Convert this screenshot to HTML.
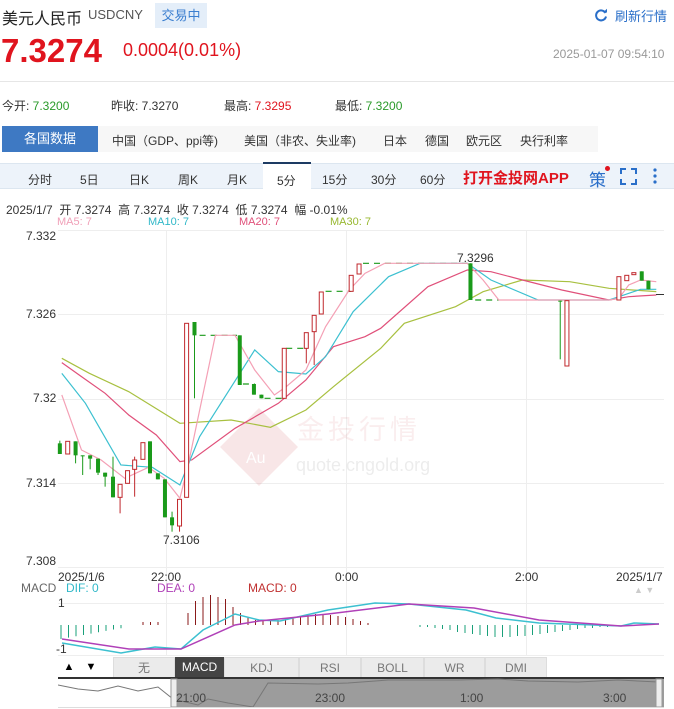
<!DOCTYPE html><html><head><meta charset="utf-8"><style>
*{margin:0;padding:0;box-sizing:border-box}
body{width:674px;height:709px;overflow:hidden;background:#fff;font-family:"Liberation Sans","Noto Sans CJK SC",sans-serif;color:#333;position:relative}
.a{position:absolute;white-space:nowrap}
</style></head><body>
<div class="a" style="left:2px;top:5px;font-size:16px;color:#222">美元人民币</div>
<div class="a" style="left:88px;top:7px;font-size:13px;color:#555">USDCNY</div>
<div class="a" style="left:155px;top:3px;width:52px;height:25px;background:#e4eef9;color:#3b7fd0;font-size:13px;line-height:25px;text-align:center">交易中</div>
<svg class="a" style="left:594px;top:8px" width="14" height="14" viewBox="0 0 14 14"><path d="M11.5 5A5 5 0 1 0 12 8.5" fill="none" stroke="#2a6fc9" stroke-width="2"/><path d="M9 4.5h4V0.8z" fill="#2a6fc9"/></svg>
<div class="a" style="left:615px;top:6px;font-size:13px;color:#2a6fc9">刷新行情</div>
<div class="a" style="left:1px;top:32px;font-size:33px;font-weight:bold;color:#e0141e">7.3274</div>
<div class="a" style="left:123px;top:40px;font-size:18px;color:#e0141e">0.0004(0.01%)</div>
<div class="a" style="left:553px;top:47px;font-size:12px;color:#999">2025-01-07 09:54:10</div>
<div class="a" style="left:0;top:81px;width:674px;height:1px;background:#e6e6e6"></div>
<div class="a" style="left:2px;top:97px;font-size:12px">今开: <span style="color:#2a9a2a">7.3200</span></div>
<div class="a" style="left:111px;top:97px;font-size:12px">昨收: 7.3270</div>
<div class="a" style="left:224px;top:97px;font-size:12px">最高: <span style="color:#e0141e">7.3295</span></div>
<div class="a" style="left:335px;top:97px;font-size:12px">最低: <span style="color:#2a9a2a">7.3200</span></div>
<div class="a" style="left:2px;top:126px;width:96px;height:26px;background:#3e79c3;color:#fff;font-size:13px;line-height:26px;text-align:center">各国数据</div>
<div class="a" style="left:98px;top:126px;width:500px;height:26px;background:#f7f7f7"></div>
<div class="a" style="left:112px;top:132px;font-size:12px">中国（GDP、ppi等)</div>
<div class="a" style="left:244px;top:132px;font-size:12px">美国（非农、失业率)</div>
<div class="a" style="left:383px;top:132px;font-size:12px">日本</div>
<div class="a" style="left:425px;top:132px;font-size:12px">德国</div>
<div class="a" style="left:466px;top:132px;font-size:12px">欧元区</div>
<div class="a" style="left:520px;top:132px;font-size:12px">央行利率</div>
<div class="a" style="left:0;top:163px;width:674px;height:26px;background:#edf3fa;border-top:1px solid #dce6f0;border-bottom:1px solid #dce6f0"></div>
<div class="a" style="left:263px;top:162px;width:48px;height:28px;background:#fff;border-top:2px solid #1d3b63"></div>
<div class="a" style="top:171px;left:28px;font-size:12px">分时</div>
<div class="a" style="top:171px;left:80px;font-size:12px">5日</div>
<div class="a" style="top:171px;left:129px;font-size:12px">日K</div>
<div class="a" style="top:171px;left:178px;font-size:12px">周K</div>
<div class="a" style="top:171px;left:227px;font-size:12px">月K</div>
<div class="a" style="top:172px;left:277px;font-size:12px">5分</div>
<div class="a" style="top:171px;left:322px;font-size:12px">15分</div>
<div class="a" style="top:171px;left:371px;font-size:12px">30分</div>
<div class="a" style="top:171px;left:420px;font-size:12px">60分</div>
<div class="a" style="top:167px;left:463px;font-size:15px;font-weight:bold;color:#e0141e">打开金投网APP</div>
<div class="a" style="top:166px;left:589px;font-size:17px;color:#2a6fc9">策</div>
<div class="a" style="top:166px;left:605px;width:5px;height:5px;border-radius:50%;background:#e0141e"></div>
<svg class="a" style="left:620px;top:168px" width="17" height="17"><path d="M1 6V1h5M11 1h5v5M16 11v5h-5M6 16H1v-5" fill="none" stroke="#2a6fc9" stroke-width="2"/></svg>
<svg class="a" style="left:652px;top:167px" width="6" height="18"><circle cx="3" cy="3" r="1.6" fill="#2a6fc9"/><circle cx="3" cy="9" r="1.6" fill="#2a6fc9"/><circle cx="3" cy="15" r="1.6" fill="#2a6fc9"/></svg>
<div class="a" style="left:6px;top:201px;font-size:12px">2025/1/7 &nbsp;开 7.3274 &nbsp;高 7.3274 &nbsp;收 7.3274 &nbsp;低 7.3274 &nbsp;幅 -0.01%</div>
<div class="a" style="left:57px;top:216px;font-size:11px;color:#f0a0b8">MA5: 7</div>
<div class="a" style="left:148px;top:216px;font-size:11px;color:#30b8c8">MA10: 7</div>
<div class="a" style="left:239px;top:216px;font-size:11px;color:#e0507a">MA20: 7</div>
<div class="a" style="left:330px;top:216px;font-size:11px;color:#98b830">MA30: 7</div>
<div class="a" style="left:26px;top:229px;font-size:12px">7.332</div>
<div class="a" style="left:26px;top:307px;font-size:12px">7.326</div>
<div class="a" style="left:33px;top:391px;font-size:12px">7.32</div>
<div class="a" style="left:26px;top:476px;font-size:12px">7.314</div>
<div class="a" style="left:26px;top:554px;font-size:12px">7.308</div>
<svg class="a" style="left:0;top:0" width="674" height="709">
<g stroke="#eeeeee" stroke-width="1">
<line x1="58" y1="230.5" x2="664" y2="230.5"/><line x1="58" y1="314.5" x2="664" y2="314.5"/><line x1="58" y1="399.5" x2="664" y2="399.5"/><line x1="58" y1="483.5" x2="664" y2="483.5"/><line x1="58" y1="567.5" x2="664" y2="567.5"/>
<line x1="166.5" y1="230" x2="166.5" y2="655"/><line x1="346.5" y1="230" x2="346.5" y2="655"/><line x1="526.5" y1="230" x2="526.5" y2="655"/>
<line x1="58" y1="603.5" x2="664" y2="603.5"/><line x1="58" y1="655.5" x2="664" y2="655.5"/>
</g>
<g opacity="0.1"><path d="M259 408L298 447L259 486L220 447Z" fill="#c0141e"/><text x="246" y="463" font-size="16" fill="#fff" font-family="Liberation Sans">Au</text></g>
<text x="297" y="439" font-size="27" fill="#c0141e" opacity="0.07" font-family="Noto Sans CJK SC" letter-spacing="4">金投行情</text>
<text x="296" y="471" font-size="18" fill="#888" opacity="0.15" font-family="Liberation Sans">quote.cngold.org</text>
<g transform="translate(50,230) scale(0.3937,0.3333)" fill="none" stroke-width="1.2">
<g stroke="#1a9a1a" stroke-dasharray="6 5"><path d="M380 316H475M490 462H520M545 505H590M600 355H650M700 184H765M795 100H1060M1080 210H1140" vector-effect="non-scaling-stroke"/></g>
<path vector-effect="non-scaling-stroke" stroke="#a8c040" d="M30 385L100 430L200 485L330 580L460 570L560 592L650 540L720 470L840 355L900 280L1030 230L1100 185L1200 150L1320 155L1420 175L1540 185"/>
<path vector-effect="non-scaling-stroke" stroke="#e0507a" d="M30 398L80 440L140 490L200 555L270 615L330 695L360 690L470 595L580 520L650 450L720 350L800 320L840 295L960 170L1060 120L1120 125L1200 150L1300 180L1420 210L1470 200L1540 195"/>
<path vector-effect="non-scaling-stroke" stroke="#3cc0d0" d="M30 430L90 520L180 705L260 712L330 765L380 620L520 360L580 425L650 432L700 380L770 245L860 140L940 100L1060 100L1120 150L1240 210L1420 210L1445 200L1500 178L1540 178"/>
<path vector-effect="non-scaling-stroke" stroke="#f4a0b5" d="M30 495L80 660L130 690L190 745L250 712L290 745L330 805L350 710L420 316L470 316L520 420L570 495L600 470L650 420L700 290L760 180L800 130L850 100L1060 100L1100 150L1140 210L1420 210L1445 205L1470 165L1500 150L1540 155"/>
</g>
<g id="c"></g>
<g id="m"></g>
<path d="M62 643L121 653L155 647L181 649L203 630L235 614L259 620L280 621L328 610L375 603L409 604L466 610L496 618L539 623L621 626L634 623L659 624" fill="none" stroke="#3cc0d0" stroke-width="1.5"/>
<path d="M62 639L129 649L181 649L235 625L259 621L328 614L409 604L474 608L539 620L621 626L659 624" fill="none" stroke="#b040b8" stroke-width="1.5"/>
<text x="163" y="544" font-size="12" fill="#333">7.3106</text>
<text x="457" y="262" font-size="12" fill="#333">7.3296</text>
<line x1="656" y1="294.5" x2="664" y2="294.5" stroke="#333"/>
</svg>
<div class="a" style="left:58px;top:570px;font-size:12px">2025/1/6</div>
<div class="a" style="left:151px;top:570px;font-size:12px">22:00</div>
<div class="a" style="left:335px;top:570px;font-size:12px">0:00</div>
<div class="a" style="left:515px;top:570px;font-size:12px">2:00</div>
<div class="a" style="left:616px;top:570px;font-size:12px">2025/1/7</div>
<div class="a" style="left:21px;top:581px;font-size:12px;color:#666">MACD</div>
<div class="a" style="left:66px;top:581px;font-size:12px;color:#30b8c8">DIF: 0</div>
<div class="a" style="left:157px;top:581px;font-size:12px;color:#b040b8">DEA: 0</div>
<div class="a" style="left:248px;top:581px;font-size:12px;color:#c03030">MACD: 0</div>
<div class="a" style="left:634px;top:585px;font-size:9px;color:#ccc">▲ ▼</div>
<div class="a" style="left:58px;top:596px;font-size:12px">1</div>
<div class="a" style="left:56px;top:642px;font-size:12px">-1</div>
<div class="a" style="left:58px;top:657px;width:22px;height:20px;font-size:11px;line-height:20px;text-align:center;color:#000">▲</div>
<div class="a" style="left:80px;top:657px;width:22px;height:20px;font-size:11px;line-height:20px;text-align:center;color:#000">▼</div>
<div class="a" style="left:113px;top:657px;display:flex;font-size:12px;line-height:20px;text-align:center;color:#777">
<div style="width:62px;background:#ebebeb;border:1px solid #ddd">无</div><div style="width:49px;background:#444;color:#fff">MACD</div><div style="width:75px;background:#ebebeb;border:1px solid #ddd">KDJ</div><div style="width:62px;background:#ebebeb;border:1px solid #ddd">RSI</div><div style="width:63px;background:#ebebeb;border:1px solid #ddd">BOLL</div><div style="width:61px;background:#ebebeb;border:1px solid #ddd">WR</div><div style="width:62px;background:#ebebeb;border:1px solid #ddd">DMI</div></div>
<svg class="a" style="left:58px;top:677px" width="606" height="32">
<rect x="0" y="0" width="606" height="2" fill="#333"/>
<rect x="118" y="2" width="538" height="28" fill="#9c9c9c"/>
<path d="M0 8L20 12L40 14L60 9L80 14L100 10L115 22L140 28L150 22L170 26L195 30L210 6L260 7L290 6L330 3L400 3L440 2L470 4L520 5L560 3L600 5" fill="none" stroke="#777" stroke-width="1"/>
<rect x="113" y="2" width="6" height="28" fill="#eee" stroke="#999"/><rect x="598" y="2" width="6" height="28" fill="#eee" stroke="#999"/>
<rect x="0" y="30" width="606" height="1" fill="#ddd"/>
<text x="118" y="25" font-size="12" fill="#444">21:00</text><text x="257" y="25" font-size="12" fill="#444">23:00</text><text x="402" y="25" font-size="12" fill="#444">1:00</text><text x="545" y="25" font-size="12" fill="#444">3:00</text>
</svg>
<script>
var C=[[25,640,672,632,672,'g'],[45,634,672,634,672,'r'],[65,634,676,634,700,'g'],[83,676,679,676,735,'g'],[102,676,686,676,718,'g'],[122,686,728,686,735,'g'],[140,728,740,728,770,'g'],[160,740,802,680,802,'g'],[178,763,802,763,850,'r'],[197,722,760,722,760,'r'],[215,690,718,680,800,'r'],[236,638,688,638,688,'r'],[254,634,730,634,730,'g'],[274,730,748,730,748,'g'],[292,748,862,748,862,'g'],[310,862,886,845,905,'g'],[329,808,888,808,905,'r'],[347,280,802,280,802,'r'],[367,276,316,276,505,'g'],[482,316,465,316,465,'g'],[518,462,494,462,494,'g'],[537,494,505,494,505,'g'],[595,355,505,355,505,'r'],[651,308,355,308,400,'r'],[671,256,305,256,405,'r'],[689,186,252,186,252,'r'],[765,136,184,136,184,'r'],[785,102,132,102,132,'r'],[1068,100,210,100,210,'g'],[1296,212,214,212,388,'g'],[1313,212,408,212,408,'r'],[1445,140,210,140,210,'r'],[1465,136,152,136,152,'r'],[1483,128,134,128,134,'r'],[1503,124,152,124,152,'g'],[1520,152,178,152,178,'g']];
var s='';C.forEach(function(c){var x=50+c[0]/2.54,t=230+c[1]/3,b=230+c[2]/3,h=230+c[3]/3,l=230+c[4]/3,g=c[5]=='g',col=g?'#1a9a1a':'#c0282d';
s+='<line x1="'+x+'" x2="'+x+'" y1="'+h+'" y2="'+l+'" stroke="'+col+'"/>';
s+='<rect x="'+(x-2)+'" y="'+t+'" width="4" height="'+Math.max(1,b-t)+'" fill="'+(g?col:'#fff')+'" stroke="'+col+'" stroke-width="'+(g?0:1)+'"/>';});
document.getElementById('c').innerHTML=s;
var m='';function bar(x,h,col){m+='<line x1="'+x+'" x2="'+x+'" y1="625" y2="'+(625-h)+'" stroke="'+col+'"/>';}
var x;for(x=61;x<=128;x+=7.5){bar(x,-(14-(x-61)*0.18),'#1aa07a');}
for(x=143;x<=160;x+=7.5)bar(x,3,'#8a1a1a');
var rh=[12,24,28,30,28,26,18,12,8,5,4,4,5,6,8,9,10,11,11,10,9,8,6,4,2];x=188;rh.forEach(function(h){bar(x,h,'#8a1a1a');x+=7.5;});
var gh=[2,2,3,4,5,7,8,9,10,11,12,12,12,11,11,10,9,8,7,6,5,4,3,3,2,2];x=420;gh.forEach(function(h){bar(x,-h,'#1aa07a');x+=7.5;});
document.getElementById('m').innerHTML=m;
</script>
</body></html>
